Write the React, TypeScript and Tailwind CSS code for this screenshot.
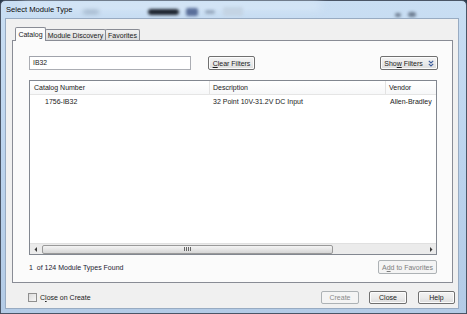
import React from "react";

const btn =
  "flex items-center justify-center rounded-[2px] border border-[#707070] bg-gradient-to-b from-[#f3f3f3] via-[#ebebeb] to-[#dcdcdc] text-[#1b1b1b] shadow-[inset_0_0_0_1px_#fcfcfc]";

export default function App() {
  return (
    <div
      className="w-[467px] h-[314px] overflow-hidden bg-[#2b3a4c] text-[7px] leading-none text-[#1a1a1a]"
      style={{ fontFamily: '"Liberation Sans", Arial, sans-serif' }}
    >
      <div className="relative flex h-full w-full flex-col rounded-t-[5px] border border-[#4a5566] bg-gradient-to-b from-[#c9def3] via-[#bcd4ee] to-[#b3cbe6]">
        {/* blurred background behind aero glass */}
        <div className="absolute left-[20px] top-[2px] h-[6px] w-[300px] rounded-full bg-[#dceaf8] blur-[4px]" />
        <div className="absolute left-[82px] top-[9px] h-[4px] w-[16px] rounded-full bg-[#9fb3c8] blur-[2px]" />
        <div className="absolute left-[147px] top-[8px] h-[6px] w-[31px] rounded-full bg-[#1e2530] blur-[1.5px]" />
        <div className="absolute left-[185px] top-[7px] h-[8px] w-[12px] rounded-[2px] bg-[#5a6f9a] blur-[1.5px]" />
        <div className="absolute left-[204px] top-[9px] h-[4px] w-[10px] rounded-full bg-[#98aac0] blur-[1.5px]" />
        <div className="absolute left-[222px] top-[6px] h-[9px] w-[20px] rounded-[2px] bg-[#c4d4e4] blur-[1.5px]" />
        <div className="absolute left-[394px] top-[12px] h-[4px] w-[6px] rounded-full bg-[#6d7d91] blur-[1.5px]" />
        <div className="absolute left-[407px] top-[11px] h-[5px] w-[8px] rounded-full bg-[#6d7d91] blur-[1.5px]" />

        {/* title bar */}
        <div className="relative z-10 flex h-[17px] items-center pl-[5px] text-[7.6px] text-[#0a0a0a]">
          Select Module Type
        </div>

        {/* client area */}
        <div className="relative mb-[4px] ml-[4px] mr-[7px] flex flex-1 flex-col border border-[#98abc2] bg-[#f0f0f0]">
          {/* tabs */}
          <div className="ml-[9px] mt-[8px] flex h-[13px] items-end">
            <div className="relative z-10 -mb-px flex h-[14px] w-[31px] items-center justify-center rounded-t-[2px] border border-b-0 border-[#898c95] bg-[#fbfbfb] pb-[1px]">
              Catalog
            </div>
            <div className="-ml-px flex h-[11px] w-[61px] items-center justify-center rounded-t-[2px] border border-b-0 border-[#898c95] bg-gradient-to-b from-[#f2f2f2] to-[#dcdcdc]">
              Module Discovery
            </div>
            <div className="-ml-px flex h-[11px] w-[35px] items-center justify-center rounded-t-[2px] border border-b-0 border-[#898c95] bg-gradient-to-b from-[#f2f2f2] to-[#dcdcdc]">
              Favorites
            </div>
          </div>

          {/* tab panel */}
          <div className="ml-[6px] mr-[5px] flex h-[243px] flex-col border border-[#898c95] bg-[#fbfbfb] pl-[16px] pr-[14px]">
            {/* search row */}
            <div className="mt-[15px] flex h-[14px] items-center">
              <div className="flex h-[14px] w-[162px] items-center border border-[#abadb3] border-t-[#a0a3ab] bg-white pl-[3px] text-[6.8px]">
                IB32
              </div>
              <div className={`${btn} ml-[17px] h-[14px] w-[47px]`}>
                <span>
                  <span className="underline">C</span>lear Filters
                </span>
              </div>
              <div className={`${btn} ml-auto h-[14px] w-[58px] gap-[5px]`}>
                <span>
                  Sho<span className="underline">w</span> Filters
                </span>
                <svg width="6" height="7" viewBox="0 0 6 7">
                  <path
                    d="M0.8 0.8 L3 3 L5.2 0.8 M0.8 3.8 L3 6 L5.2 3.8"
                    fill="none"
                    stroke="#3b5b9a"
                    strokeWidth="1.1"
                  />
                </svg>
              </div>
            </div>

            {/* list */}
            <div className="mt-[10px] flex h-[175px] w-[408px] flex-col border border-[#828790] bg-white">
              <div className="flex h-[14px] border-b border-[#e5e5e5] bg-gradient-to-b from-white to-[#f7f8f9]">
                <div className="flex w-[180px] items-center border-r border-[#e3e3e3] pl-[4px]">
                  Catalog Number
                </div>
                <div className="flex w-[176px] items-center border-r border-[#e3e3e3] pl-[3px]">
                  Description
                </div>
                <div className="flex flex-1 items-center pl-[3px]">Vendor</div>
              </div>
              <div className="flex h-[13px] items-center">
                <div className="w-[180px] pl-[15px]">1756-IB32</div>
                <div className="w-[176px] pl-[3px]">32 Point 10V-31.2V DC Input</div>
                <div className="flex-1 pl-[4px]">Allen-Bradley</div>
              </div>
              <div className="flex-1" />
              {/* horizontal scrollbar */}
              <div className="flex h-[11px] items-center border-t border-[#e0e0e0] bg-[#ebebeb]">
                <div className="flex h-full w-[11px] items-center justify-center">
                  <svg width="4" height="5" viewBox="0 0 4 5">
                    <path d="M3 0 L0.5 2.5 L3 5 Z" fill="#3a3a3a" />
                  </svg>
                </div>
                <div className="ml-[1px] flex h-[9px] w-[291px] items-center justify-center rounded-[2px] border border-[#999] bg-gradient-to-b from-[#f4f4f4] to-[#d6d6d6]">
                  <div className="flex gap-[1px]">
                    <div className="h-[4px] w-px bg-[#666]" />
                    <div className="h-[4px] w-px bg-[#666]" />
                    <div className="h-[4px] w-px bg-[#666]" />
                    <div className="h-[4px] w-px bg-[#666]" />
                  </div>
                </div>
                <div className="flex-1" />
                <div className="flex h-full w-[11px] items-center justify-center">
                  <svg width="4" height="5" viewBox="0 0 4 5">
                    <path d="M1 0 L3.5 2.5 L1 5 Z" fill="#3a3a3a" />
                  </svg>
                </div>
              </div>
            </div>

            {/* status row */}
            <div className="mt-[5px] flex h-[14px] items-center">
              <span className="text-[#221a30]">1&nbsp; of 124 Module Types Found</span>
              <div className="ml-auto mr-[1px] flex h-[14px] w-[59px] items-center justify-center rounded-[2px] border border-[#adb2b5] bg-[#f4f4f4] text-[#7d7d7d]">
                <span>
                  A<span className="underline">d</span>d to Favorites
                </span>
              </div>
            </div>
          </div>

          {/* bottom row */}
          <div className="mt-[7px] flex h-[14px] items-center pl-[22px] pr-[3px]">
            <div className="h-[9px] w-[9px] border border-[#8f8f8f] bg-gradient-to-br from-[#dcdcdc] to-[#f6f6f6]" />
            <span className="ml-[3px]">
              C<span className="underline">l</span>ose on Create
            </span>
            <div className="ml-auto flex h-[13px] w-[38px] items-center justify-center rounded-[2px] border border-[#adb2b5] bg-[#f4f4f4] text-[#8a8a8a]">
              Create
            </div>
            <div className={`${btn} ml-[10px] h-[13px] w-[38px]`}>Close</div>
            <div className={`${btn} ml-[11px] h-[13px] w-[37px]`}>Help</div>
          </div>
        </div>
      </div>
    </div>
  );
}
